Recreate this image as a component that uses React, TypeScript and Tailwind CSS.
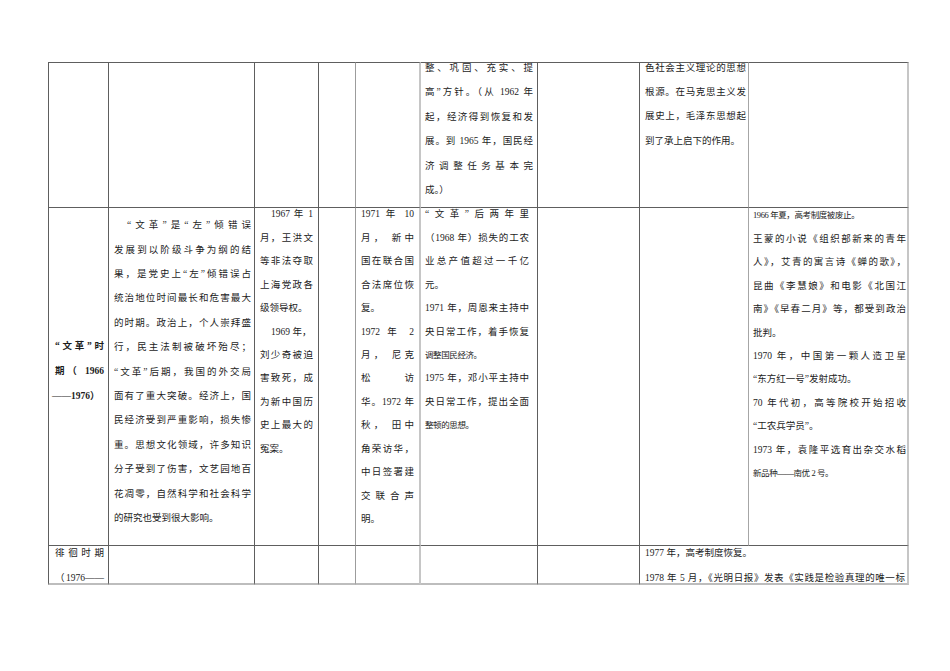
import React from 'react';

type Ln = { t: string; j?: boolean; x?: string };

// justified line / natural line
const J = (t: string, x?: string): Ln => ({ t, j: true, x });
const N = (t: string, x?: string): Ln => ({ t, x });

const Lines: React.FC<{ lines: Ln[]; pitch: string; className?: string }> = ({ lines, pitch, className }) => (
  <div className={className}>
    {lines.map((l, i) => (
      <div
        key={i}
        className={`${pitch} leading-[14px] whitespace-nowrap ${l.j ? 'text-justify [text-align-last:justify]' : ''} ${l.x ?? ''}`}
      >
        {l.t}
      </div>
    ))}
  </div>
);

// --------------------------------------------------
// CONTENT
// --------------------------------------------------
const r1c6: Ln[] = [
  J('整、巩固、充实、提'),
  J('高”方针。（从 1962 年'),
  J('起，经济得到恢复和发'),
  J('展。到 1965 年，国民经'),
  J('济调整任务基本完'),
  N('成。）'),
];

const r1c8: Ln[] = [
  J('色社会主义理论的思想'),
  J('根源。在马克思主义发'),
  J('展史上，毛泽东思想起'),
  N('到了承上启下的作用。'),
];

const r2c1: Ln[] = [J('“文革”时'), J('期（ 1966'), N('——1976）', '-ml-[3px]')];

const r2c2: Ln[] = [
  J('“文革”是“左”倾错误', 'pl-[13px]'),
  J('发展到以阶级斗争为纲的结'),
  J('果，是党史上“左”倾错误占'),
  J('统治地位时间最长和危害最大'),
  J('的时期。政治上，个人崇拜盛'),
  J('行，民主法制被破坏殆尽；'),
  J('“文革”后期，我国的外交局'),
  J('面有了重大突破。经济上，国'),
  J('民经济受到严重影响，损失惨'),
  J('重。思想文化领域，许多知识'),
  J('分子受到了伤害，文艺园地百'),
  J('花凋零，自然科学和社会科学'),
  N('的研究也受到很大影响。'),
];

const r2c3: Ln[] = [
  J('1967 年 1', 'pl-[11px]'),
  J('月，王洪文'),
  J('等非法夺取'),
  J('上海党政各'),
  N('级领导权。'),
  N('1969 年，', 'pl-[11px]'),
  J('刘少奇被迫'),
  J('害致死，成'),
  J('为新中国历'),
  J('史上最大的'),
  N('冤案。'),
];

const r2c5: Ln[] = [
  J('1971 年 10'),
  J('月， 新中'),
  J('国在联合国'),
  J('合法席位恢'),
  N('复。'),
  J('1972 年 2'),
  J('月， 尼克'),
  J('松访'),
  J('华。1972 年'),
  J('秋， 田中'),
  J('角荣访华，'),
  J('中日签署建'),
  J('交联合声'),
  N('明。'),
];

// tight lines are set a little smaller, as in the source document
const tight = 'text-[8.5px] tracking-[-0.4px]';

const r2c6: Ln[] = [
  J('“文革”后两年里'),
  J('（1968 年）损失的工农'),
  J('业总产值超过一千亿'),
  N('元。'),
  J('1971 年，周恩来主持中'),
  J('央日常工作，着手恢复'),
  N('调整国民经济。', tight),
  J('1975 年，邓小平主持中'),
  J('央日常工作，提出全面'),
  N('整顿的思想。', tight),
];

const r2c9: Ln[] = [
  N('1966 年夏，高考制度被废止。', tight),
  J('王蒙的小说《组织部新来的青年'),
  J('人》，艾青的寓言诗《蝉的歌》，'),
  J('昆曲《李慧娘》和电影《北国江'),
  J('南》《早春二月》等，都受到政治'),
  N('批判。'),
  J('1970 年，中国第一颗人造卫星'),
  N('“东方红一号”发射成功。'),
  J('70 年代初，高等院校开始招收'),
  N('“工农兵学员”。'),
  J('1973 年，袁隆平选育出杂交水稻'),
  N('新品种——南优 2 号。', tight),
];

const r3c1: Ln[] = [J('徘徊时期'), J('（1976——')];

const r3c8: Ln[] = [N('1977 年，高考制度恢复。'), J('1978 年 5 月，《光明日报》发表《实践是检验真理的唯一标')];

// --------------------------------------------------
// TABLE
// --------------------------------------------------
const td = 'border-r border-b border-[#5e5e5e] align-top p-0';
const first = 'border-l';
const c4 = 'border-r-[#9c9c9c]';
const c5 = 'border-r-2 border-r-[#c6c6c6]';
const c8 = 'border-r-[#a6a6a6]';
const c9 = 'border-r-2 border-r-[#c6c6c6]';
const last = 'border-b-2 border-b-[#bdbdbd]';

const App: React.FC = () => {
  return (
    <div className="w-[950px] h-[671px] overflow-hidden bg-white pt-[62px] pl-[48px] font-['Liberation_Serif','Noto_Sans_CJK_SC',serif] text-[9.5px] text-[#1c1c1c]">
      <table className="table-fixed border-separate border-spacing-0 w-[861px]">
        <tbody>
          {/* row 1: continued from previous page */}
          <tr className="h-[146px]">
            <td className={`${td} ${first} border-t w-[61px]`} />
            <td className={`${td} border-t w-[146px]`} />
            <td className={`${td} border-t w-[64px]`} />
            <td className={`${td} ${c4} border-t w-[37px]`} />
            <td className={`${td} ${c5} border-t w-[65px]`} />
            <td className={`${td} border-t w-[117px] pl-[4px] pr-[4px]`}>
              <Lines lines={r1c6} pitch="h-[24.4px]" className="-mt-[2px]" />
            </td>
            <td className={`${td} border-t w-[102px]`} />
            <td className={`${td} ${c8} border-t w-[109px] pl-[5px] pr-[2px]`}>
              <Lines lines={r1c8} pitch="h-[24.2px]" className="-mt-[2px]" />
            </td>
            <td className={`${td} ${c9} border-t w-[160px]`} />
          </tr>

          {/* row 2: 文革时期 */}
          <tr className="h-[338px]">
            <td className={`${td} ${first} !align-middle pl-[6px] pr-[4px] font-bold`}>
              <Lines lines={r2c1} pitch="h-[25px]" />
            </td>
            <td className={`${td} !align-middle pl-[5px] pr-[3px]`}>
              <Lines lines={r2c2} pitch="h-[24.4px]" />
            </td>
            <td className={`${td} pl-[5px] pr-[5px]`}>
              <Lines lines={r2c3} pitch="h-[23.45px]" className="-mt-[1px]" />
            </td>
            <td className={`${td} ${c4}`} />
            <td className={`${td} ${c5} pl-[5px] pr-[5px]`}>
              <Lines lines={r2c5} pitch="h-[23.45px]" className="-mt-[1px]" />
            </td>
            <td className={`${td} pl-[4px] pr-[8px]`}>
              <Lines lines={r2c6} pitch="h-[23.45px]" className="-mt-[1px]" />
            </td>
            <td className={td} />
            <td className={`${td} ${c8}`} />
            <td className={`${td} ${c9} pl-[4px] pr-[1px]`}>
              <Lines lines={r2c9} pitch="h-[23.45px]" />
            </td>
          </tr>

          {/* row 3: 徘徊时期, cut at the page end */}
          <tr className="h-[39px]">
            <td className={`${td} ${first} ${last} pl-[6px] pr-[4px]`}>
              <Lines lines={r3c1} pitch="h-[25px]" className="h-[34px]" />
            </td>
            <td className={`${td} ${last}`} />
            <td className={`${td} ${last}`} />
            <td className={`${td} ${c4} ${last}`} />
            <td className={`${td} ${c5} ${last}`} />
            <td className={`${td} ${last}`} />
            <td className={`${td} ${last}`} />
            <td colSpan={2} className={`${td} ${c9} ${last} pl-[5px] pr-[2px]`}>
              <Lines lines={r3c8} pitch="h-[25px]" className="h-[34px]" />
            </td>
          </tr>
        </tbody>
      </table>
    </div>
  );
};

export default App;
